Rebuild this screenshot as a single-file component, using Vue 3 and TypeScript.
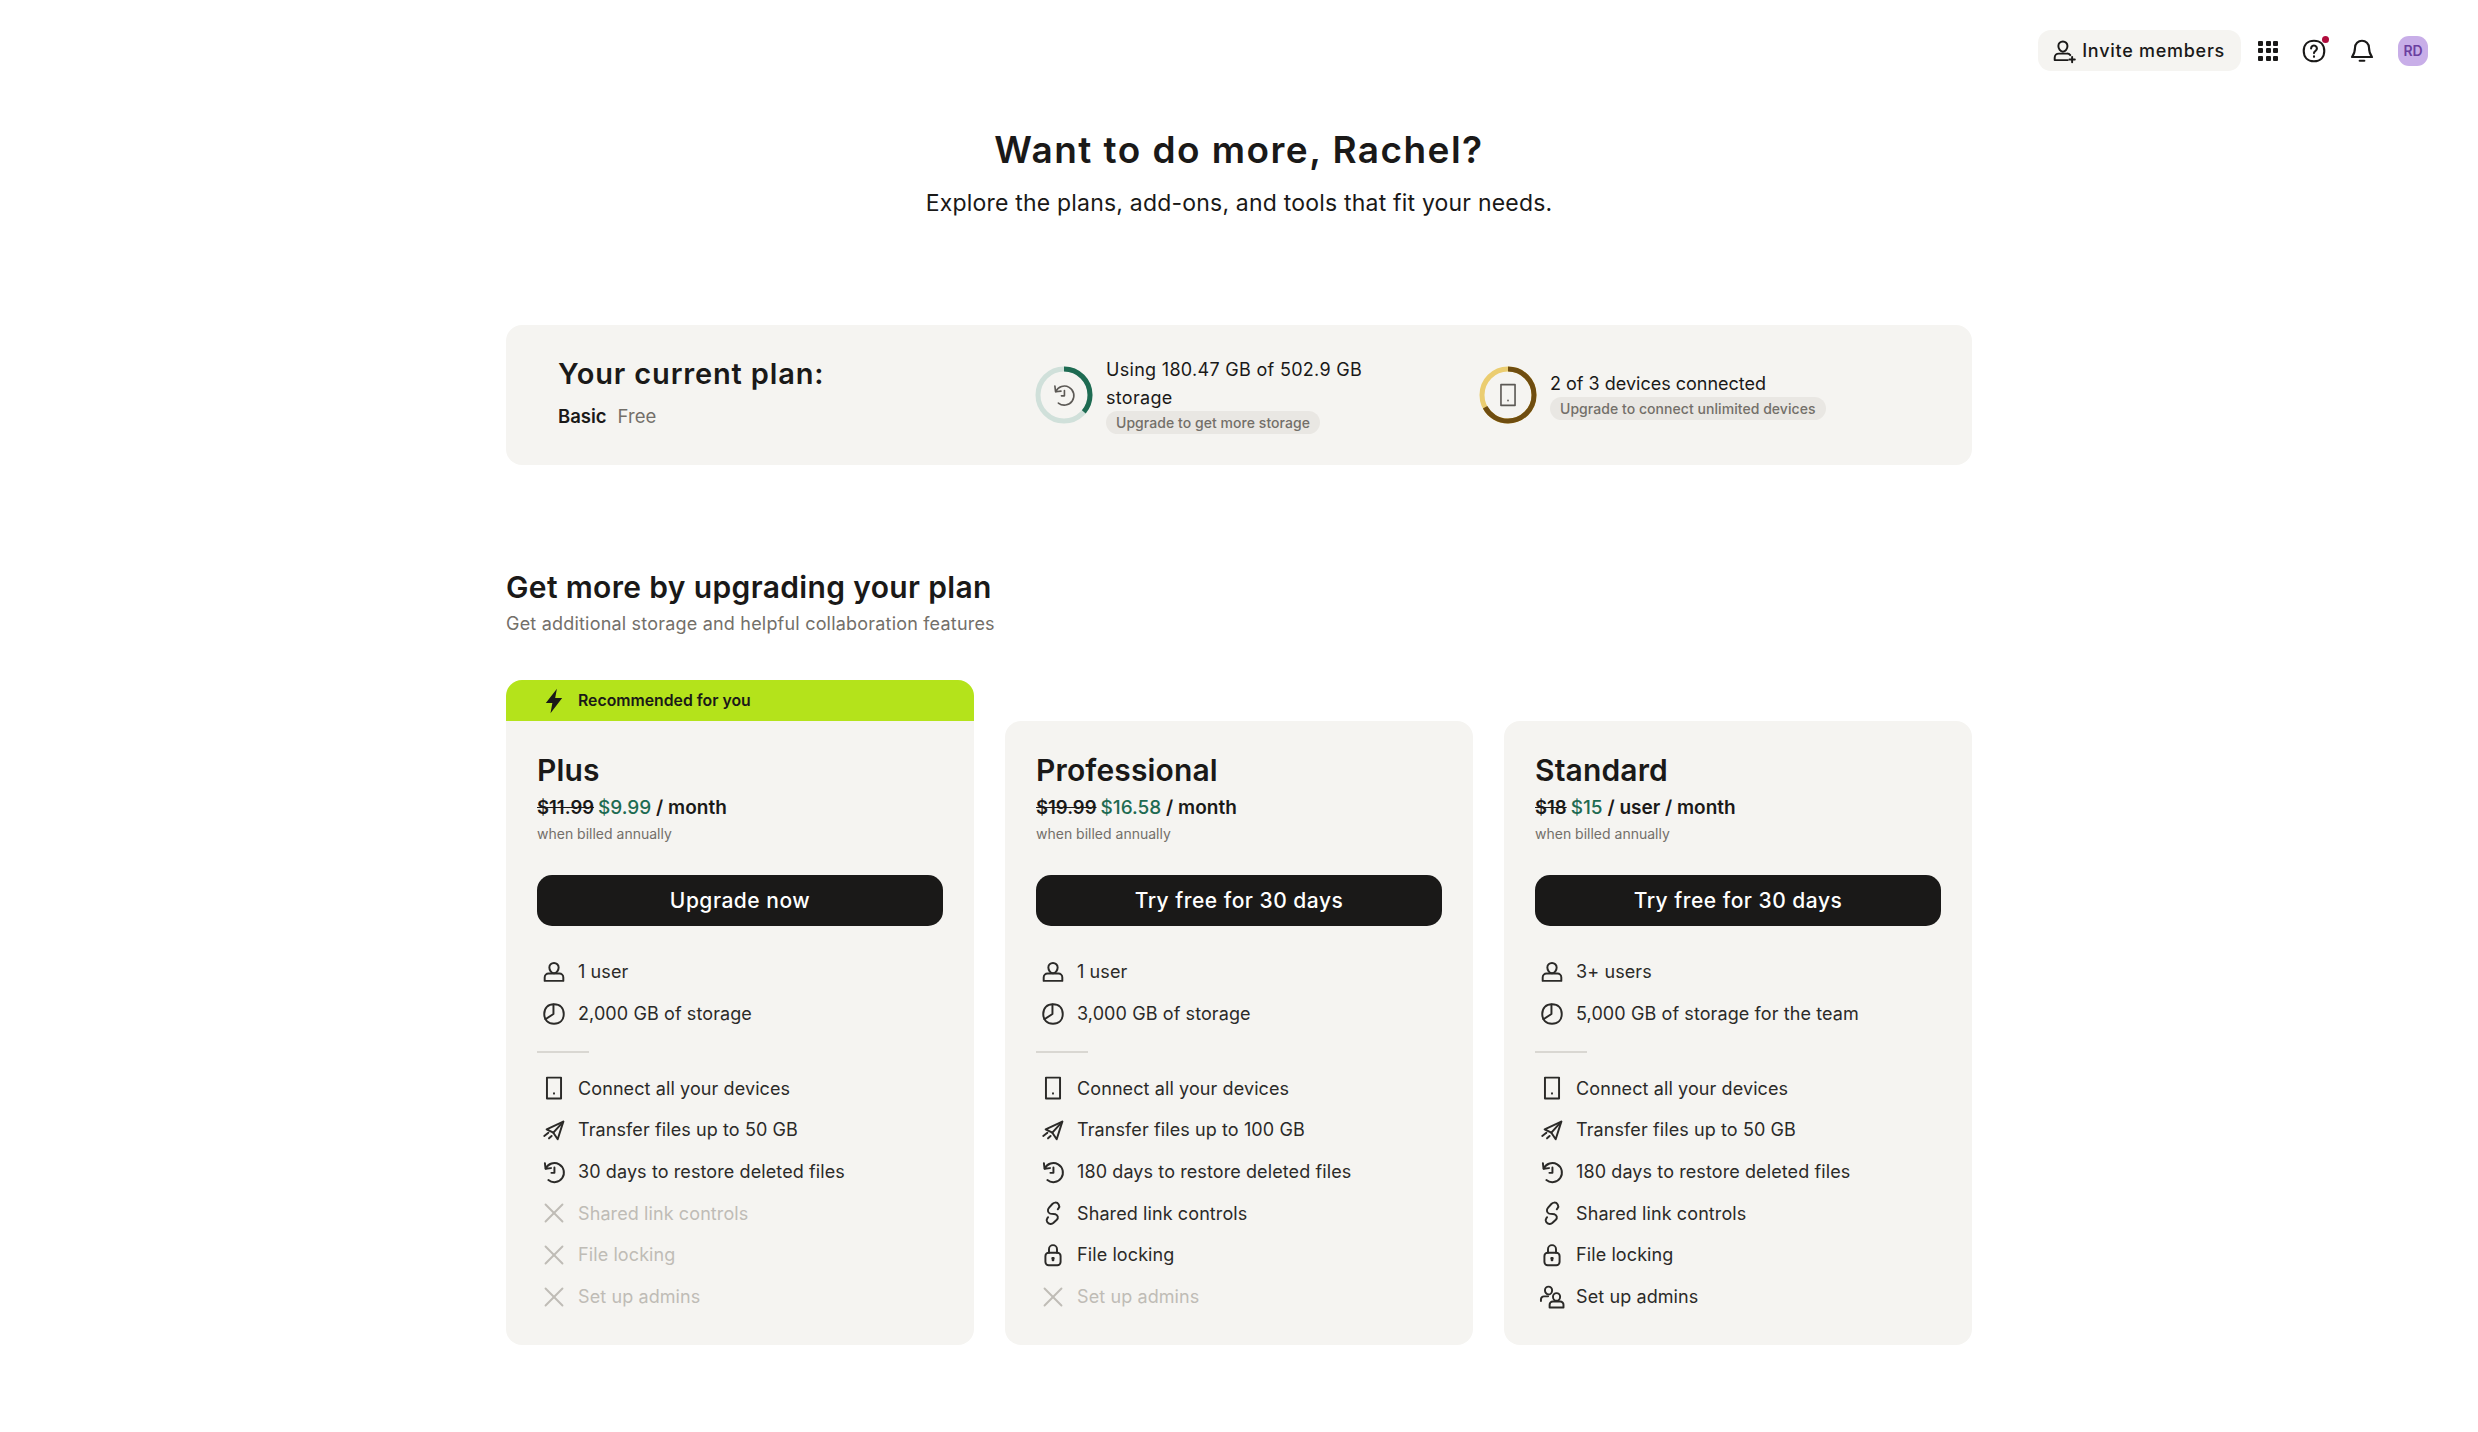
<script setup lang="ts">
interface Feature {
  icon: string;
  label: string;
  off?: boolean;
}

interface Plan {
  name: string;
  oldPrice: string;
  price: string;
  unit: string;
  cta: string;
  recommended?: boolean;
  basics: Feature[];
  extras: Feature[];
}

// stroke paths on a 24 box
const icons: Record<string, string[]> = {
  user: [
    'M12 3.6a4.3 4.3 0 0 1 4.3 4.3c0 2.3-1.9 5.2-4.3 5.2s-4.3-2.9-4.3-5.2A4.3 4.3 0 0 1 12 3.6z',
    'M3.4 20.2V17a3.6 3.6 0 0 1 3.6-3.6h10a3.6 3.6 0 0 1 3.6 3.6v3.2z',
  ],
  pie: [
    'M12 3c5.6 0 9 3.4 9 9s-3.4 9-9 9-9-3.4-9-9 3.4-9 9-9z',
    'M11.5 3.2V12l-7.4 4.8',
  ],
  device: ['M5.5 2.4h13v19.2h-13z', 'M12 16.8v.4'],
  send: [
    'M20.6 4.3 5.2 11.4l6.2 3.1 4 6.1z',
    'M20.6 4.3 11.4 14.5',
    'M3 17.5l3.8-3',
    'M7.4 19.7l2.4-2.2',
  ],
  restore: [
    'M3.6 3.8 4.2 9l5-.6',
    'M4.4 8.8A8.8 8.8 0 1 1 6.8 19.4',
    'M12.4 7.8v5H9.6',
  ],
  link: [
    'M16.4 8.6l.8-1c1.6-2.2-.4-5.4-3.2-5.2-1 .1-1.900.6-2.600 1.300L8.400 7c-1.900 2-1.200 4.800 1 5.600l5 .6c2.200.9 2.800 3.400 1.100 5l-3 2.800c-.8.7-1.700 1-2.600 1.100-2.800.2-4.800-3-3.200-5.200l.8-1',
  ],
  lock: [
    'M8.3 10V6.600a3.700 3.700 0 0 1 7.400 0V10',
    'M8 10h8a3 3 0 0 1 3 3v5.400a3 3 0 0 1-3 3H8a3 3 0 0 1-3-3V13a3 3 0 0 1 3-3z',
    'M11.400 14.800h1.200v.6l-.3.3v1.100h-.6v-1.100l-.3-.3z',
  ],
  admins: [
    'M8.800 2.400a3.300 3.300 0 0 1 3.300 3.300c0 2-1.400 4-3.300 4s-3.300-2-3.300-4a3.300 3.300 0 0 1 3.300-3.300z',
    'M1.800 15.800v-1.600a2.800 2.800 0 0 1 2.800-2.800h3.800',
    'M16.200 8.400a3.300 3.300 0 0 1 3.300 3.300c0 1.900-1.400 3.800-3.300 3.800s-3.300-1.900-3.300-3.800a3.300 3.300 0 0 1 3.300-3.300z',
    'M9.800 21.600v-2.400a3 3 0 0 1 3-3h6.800a3 3 0 0 1 3 3v2.400z',
  ],
  x: ['M4.200 4.200l15.600 15.600', 'M19.800 4.200 4.200 19.800'],
  invite: [
    'M11 3.200a4.200 4.200 0 0 1 4.200 4.200c0 2.600-1.900 5.200-4.200 5.200s-4.200-2.600-4.200-5.200A4.200 4.200 0 0 1 11 3.200z',
    'M15.500 20.400H3.400v-2.200a3.800 3.800 0 0 1 3.800-3.800h7.600a3.800 3.800 0 0 1 3 1.400',
    'M19.500 17.400v5M17 19.900h5',
  ],
  help: [
    'M12 3.200c5.400 0 8.800 3.400 8.800 8.800s-3.400 8.800-8.800 8.800S3.200 17.400 3.200 12 6.600 3.200 12 3.200z',
    'M9.500 9.800a2.500 2.500 0 1 1 3.800 2.100c-.8.500-1.300 1-1.300 1.900',
    'M12 16.600v.4',
  ],
  bell: [
    'M12 3.200a6 6 0 0 1 6 6c0 4.400 1.100 6 2.600 8H3.400c1.500-2 2.600-3.600 2.600-8a6 6 0 0 1 6-6z',
    'M10 20.400h4',
  ],
};

const first: Feature[] = [
  { icon: 'device', label: 'Connect all your devices' },
];

const plans: Plan[] = [
  {
    name: 'Plus',
    oldPrice: '$11.99',
    price: '$9.99',
    unit: '/ month',
    cta: 'Upgrade now',
    recommended: true,
    basics: [
      { icon: 'user', label: '1 user' },
      { icon: 'pie', label: '2,000 GB of storage' },
    ],
    extras: [
      ...first,
      { icon: 'send', label: 'Transfer files up to 50 GB' },
      { icon: 'restore', label: '30 days to restore deleted files' },
      { icon: 'x', label: 'Shared link controls', off: true },
      { icon: 'x', label: 'File locking', off: true },
      { icon: 'x', label: 'Set up admins', off: true },
    ],
  },
  {
    name: 'Professional',
    oldPrice: '$19.99',
    price: '$16.58',
    unit: '/ month',
    cta: 'Try free for 30 days',
    basics: [
      { icon: 'user', label: '1 user' },
      { icon: 'pie', label: '3,000 GB of storage' },
    ],
    extras: [
      ...first,
      { icon: 'send', label: 'Transfer files up to 100 GB' },
      { icon: 'restore', label: '180 days to restore deleted files' },
      { icon: 'link', label: 'Shared link controls' },
      { icon: 'lock', label: 'File locking' },
      { icon: 'x', label: 'Set up admins', off: true },
    ],
  },
  {
    name: 'Standard',
    oldPrice: '$18',
    price: '$15',
    unit: '/ user / month',
    cta: 'Try free for 30 days',
    basics: [
      { icon: 'user', label: '3+ users' },
      { icon: 'pie', label: '5,000 GB of storage for the team' },
    ],
    extras: [
      ...first,
      { icon: 'send', label: 'Transfer files up to 50 GB' },
      { icon: 'restore', label: '180 days to restore deleted files' },
      { icon: 'link', label: 'Shared link controls' },
      { icon: 'lock', label: 'File locking' },
      { icon: 'admins', label: 'Set up admins' },
    ],
  },
];

const radius = 26;
const circumference = 2 * Math.PI * radius;
const ringDash = (part: number) =>
  `${circumference * part} ${circumference * (1 - part)}`;
</script>

<template>
  <div class="page">
    <header class="topbar">
      <button class="invite">
        <svg class="icon" viewBox="0 0 24 24">
          <path v-for="d in icons.invite" :key="d" :d="d" />
        </svg>
        Invite members
      </button>
      <div class="grid-dots">
        <span v-for="n in 9" :key="n"></span>
      </div>
      <span class="help">
        <svg class="icon top-icon" viewBox="0 0 24 24">
          <path v-for="d in icons.help" :key="d" :d="d" />
        </svg>
        <i class="help-dot"></i>
      </span>
      <svg class="icon top-icon" viewBox="0 0 24 24">
        <path v-for="d in icons.bell" :key="d" :d="d" />
      </svg>
      <span class="avatar">RD</span>
    </header>

    <main class="content">
      <section class="hero">
        <h1>Want to do more, Rachel?</h1>
        <p>Explore the plans, add-ons, and tools that fit your needs.</p>
      </section>

      <section class="current">
        <div class="current-plan">
          <h2>Your current plan:</h2>
          <div class="plan-line"><b>Basic</b><span>Free</span></div>
        </div>

        <div class="usage usage-storage">
          <span class="ring">
            <svg viewBox="0 0 60 60">
              <circle class="track-green" cx="30" cy="30" :r="radius" />
              <circle
                class="bar-green"
                cx="30"
                cy="30"
                :r="radius"
                :stroke-dasharray="ringDash(0.36)"
                transform="rotate(-90 30 30)"
              />
            </svg>
            <svg class="icon ring-icon" viewBox="0 0 24 24">
              <path v-for="d in icons.restore" :key="d" :d="d" />
            </svg>
          </span>
          <div class="usage-text">
            <div>Using 180.47 GB of 502.9 GB storage</div>
            <span class="pill">Upgrade to get more storage</span>
          </div>
        </div>

        <div class="usage usage-devices">
          <span class="ring">
            <svg viewBox="0 0 60 60">
              <circle class="track-gold" cx="30" cy="30" :r="radius" />
              <circle
                class="bar-gold"
                cx="30"
                cy="30"
                :r="radius"
                :stroke-dasharray="ringDash(0.667)"
                transform="rotate(-90 30 30)"
              />
            </svg>
            <svg class="icon ring-icon" viewBox="0 0 24 24">
              <path v-for="d in icons.device" :key="d" :d="d" />
            </svg>
          </span>
          <div class="usage-text">
            <div>2 of 3 devices connected</div>
            <span class="pill">Upgrade to connect unlimited devices</span>
          </div>
        </div>
      </section>

      <section class="upgrade">
        <h2>Get more by upgrading your plan</h2>
        <p>Get additional storage and helpful collaboration features</p>
      </section>

      <section class="plans">
        <div v-for="plan in plans" :key="plan.name" class="plan-col">
          <div v-if="plan.recommended" class="banner">
            <svg viewBox="0 0 24 24" class="bolt">
              <path d="M14.5 1.5 5 13.800h5.600L9 22.500l10-13h-6z" />
            </svg>
            Recommended for you
          </div>
          <article class="plan" :class="{ 'plan-flat': plan.recommended }">
            <h3>{{ plan.name }}</h3>
            <div class="price">
              <s>{{ plan.oldPrice }}</s>
              <em>{{ plan.price }}</em>
              {{ plan.unit }}
            </div>
            <div class="billed">when billed annually</div>
            <button class="cta">{{ plan.cta }}</button>
            <ul class="features">
              <li v-for="f in plan.basics" :key="f.label">
                <svg class="icon" viewBox="0 0 24 24">
                  <path v-for="d in icons[f.icon]" :key="d" :d="d" />
                </svg>
                {{ f.label }}
              </li>
            </ul>
            <hr />
            <ul class="features">
              <li
                v-for="f in plan.extras"
                :key="f.label"
                :class="{ off: f.off }"
              >
                <svg class="icon" viewBox="0 0 24 24">
                  <path v-for="d in icons[f.icon]" :key="d" :d="d" />
                </svg>
                {{ f.label }}
              </li>
            </ul>
          </article>
        </div>
      </section>
    </main>
  </div>
</template>

<style scoped>
.page {
  width: 2478px;
  height: 1432px;
  overflow: hidden;
  background: #fff;
  color: #1a1918;
  font-family: Inter, "Liberation Sans", sans-serif;
  box-sizing: border-box;
}

.topbar {
  display: flex;
  justify-content: flex-end;
  align-items: center;
  gap: 20px;
  height: 41px;
  padding: 30px 50px 0 0;
}

.icon {
  width: 26px;
  height: 26px;
  flex: none;
  fill: none;
  stroke: currentColor;
  stroke-width: 1.8;
  stroke-linecap: round;
  stroke-linejoin: round;
}

.top-icon {
  width: 28px;
  height: 28px;
}

.invite {
  display: flex;
  align-items: center;
  gap: 5px;
  height: 41px;
  padding: 0 16px 0 13px;
  border: none;
  border-radius: 13px;
  background: #f5f4f1;
  color: #1a1918;
  font: 500 18px Inter, sans-serif;
  letter-spacing: 0.73px;
}

.grid-dots {
  display: grid;
  grid-template-columns: repeat(3, 5px);
  gap: 2.5px;
  margin-left: -3px;
}

.grid-dots span {
  width: 5px;
  height: 5px;
  border-radius: 1px;
  background: #1a1918;
}

.help {
  position: relative;
  display: flex;
  margin-left: 2px;
}

.help-dot {
  position: absolute;
  top: -1px;
  right: -1px;
  width: 7px;
  height: 7px;
  border-radius: 50%;
  background: #b00b3c;
}

.avatar {
  display: flex;
  align-items: center;
  justify-content: center;
  width: 30px;
  height: 30px;
  margin-left: 2px;
  border-radius: 11px;
  background: #c8aee8;
  color: #6b3fa0;
  font-size: 14px;
  font-weight: 600;
}

.content {
  width: 1466px;
  margin: 0 auto;
}

.hero {
  text-align: center;
  padding-top: 55px;
}

.hero h1 {
  margin: 0;
  font-size: 37px;
  line-height: 48px;
  font-weight: 600;
  letter-spacing: 1.45px;
}

.hero p {
  margin: 14px 0 0;
  font-size: 23px;
  line-height: 30px;
  letter-spacing: 0.2px;
}

.current {
  display: flex;
  align-items: center;
  height: 140px;
  margin-top: 107px;
  padding-left: 52px;
  border-radius: 16px;
  background: #f5f4f1;
}

.current-plan {
  width: 476px;
  padding-bottom: 6px;
}

.current-plan h2 {
  margin: 0;
  font-size: 29px;
  line-height: 36px;
  font-weight: 600;
  letter-spacing: 0.85px;
}

.plan-line {
  display: flex;
  gap: 11px;
  margin-top: 12px;
  font-size: 18.5px;
  line-height: 24px;
}

.plan-line b {
  font-weight: 600;
}

.plan-line span {
  color: #736f69;
}

.usage {
  display: flex;
  align-items: center;
  gap: 12px;
  font-size: 18px;
  line-height: 28px;
}

.usage-storage {
  width: 444px;
}

.usage-storage .usage-text {
  width: 300px;
  letter-spacing: 0.3px;
}

.usage-text {
  margin-top: 6px;
}

.ring {
  position: relative;
  width: 60px;
  height: 60px;
  flex: none;
}

.ring > svg:first-child {
  display: block;
  width: 60px;
  height: 60px;
  fill: none;
  stroke-width: 5;
}

.ring-icon {
  position: absolute;
  top: 17px;
  left: 17px;
  color: #5c5955;
  stroke-width: 1.5;
}

.track-green {
  stroke: #d0e0da;
}

.bar-green {
  stroke: #1e6b52;
}

.track-gold {
  stroke: #ebcd70;
}

.bar-gold {
  stroke: #6f4d10;
}

.pill {
  display: inline-block;
  margin-top: -1px;
  padding: 0 10px;
  border-radius: 12px;
  background: #e9e7e3;
  color: #736f69;
  font-size: 14px;
  line-height: 23px;
  font-weight: 500;
  letter-spacing: 0.05px;
  vertical-align: top;
}

.usage-text > div {
  line-height: 28px;
}

.upgrade {
  margin-top: 98px;
}

.upgrade h2 {
  margin: 0;
  font-size: 30px;
  line-height: 48px;
  font-weight: 600;
  letter-spacing: 0.35px;
}

.upgrade p {
  margin: 0;
  color: #736f69;
  font-size: 18px;
  line-height: 26px;
  letter-spacing: 0.2px;
}

.plans {
  display: grid;
  grid-template-columns: repeat(3, 1fr);
  gap: 31px;
  align-items: end;
  margin-top: 43px;
}

.banner {
  display: flex;
  align-items: center;
  gap: 10px;
  height: 41px;
  padding-left: 34px;
  border-radius: 16px 16px 0 0;
  background: #b4e31b;
  font-size: 15.8px;
  font-weight: 600;
}

.bolt {
  width: 28px;
  height: 28px;
  fill: #1a1918;
}

.plan {
  height: 624px;
  box-sizing: border-box;
  padding: 30px 31px 0;
  border-radius: 16px;
  background: #f5f4f1;
}

.plan-flat {
  border-radius: 0 0 16px 16px;
}

.plan h3 {
  margin: 0;
  font-size: 30px;
  line-height: 38px;
  font-weight: 600;
  letter-spacing: 0.15px;
}

.price {
  margin-top: 5px;
  font-size: 19px;
  line-height: 26px;
  font-weight: 600;
}

.price s {
  margin-right: 4px;
  font-size: 18.5px;
  font-weight: 600;
}

.price em {
  color: #1e6b52;
  font-style: normal;
  font-weight: 500;
}

.billed {
  margin-top: 2px;
  color: #736f69;
  font-size: 14px;
  line-height: 22px;
}

.cta {
  display: block;
  width: 100%;
  height: 51px;
  margin-top: 30px;
  border: none;
  border-radius: 15px;
  background: #1a1918;
  color: #fff;
  font: 500 21px Inter, sans-serif;
  letter-spacing: 0.5px;
}

.features {
  margin: 0;
  padding: 0;
  list-style: none;
}

.plan > .features:first-of-type {
  margin-top: 25px;
}

.features li {
  display: flex;
  align-items: center;
  gap: 11px;
  height: 41.7px;
  padding-left: 4px;
  font-size: 18px;
  letter-spacing: 0.1px;
  color: #2b2a28;
}

.features li.off {
  color: #bfbcb6;
}

.plan hr {
  width: 52px;
  height: 2px;
  margin: 17px 0 14px;
  border: none;
  background: #d9d7d2;
}
</style>

<style>
html,
body {
  margin: 0;
  background: #fff;
}
</style>
